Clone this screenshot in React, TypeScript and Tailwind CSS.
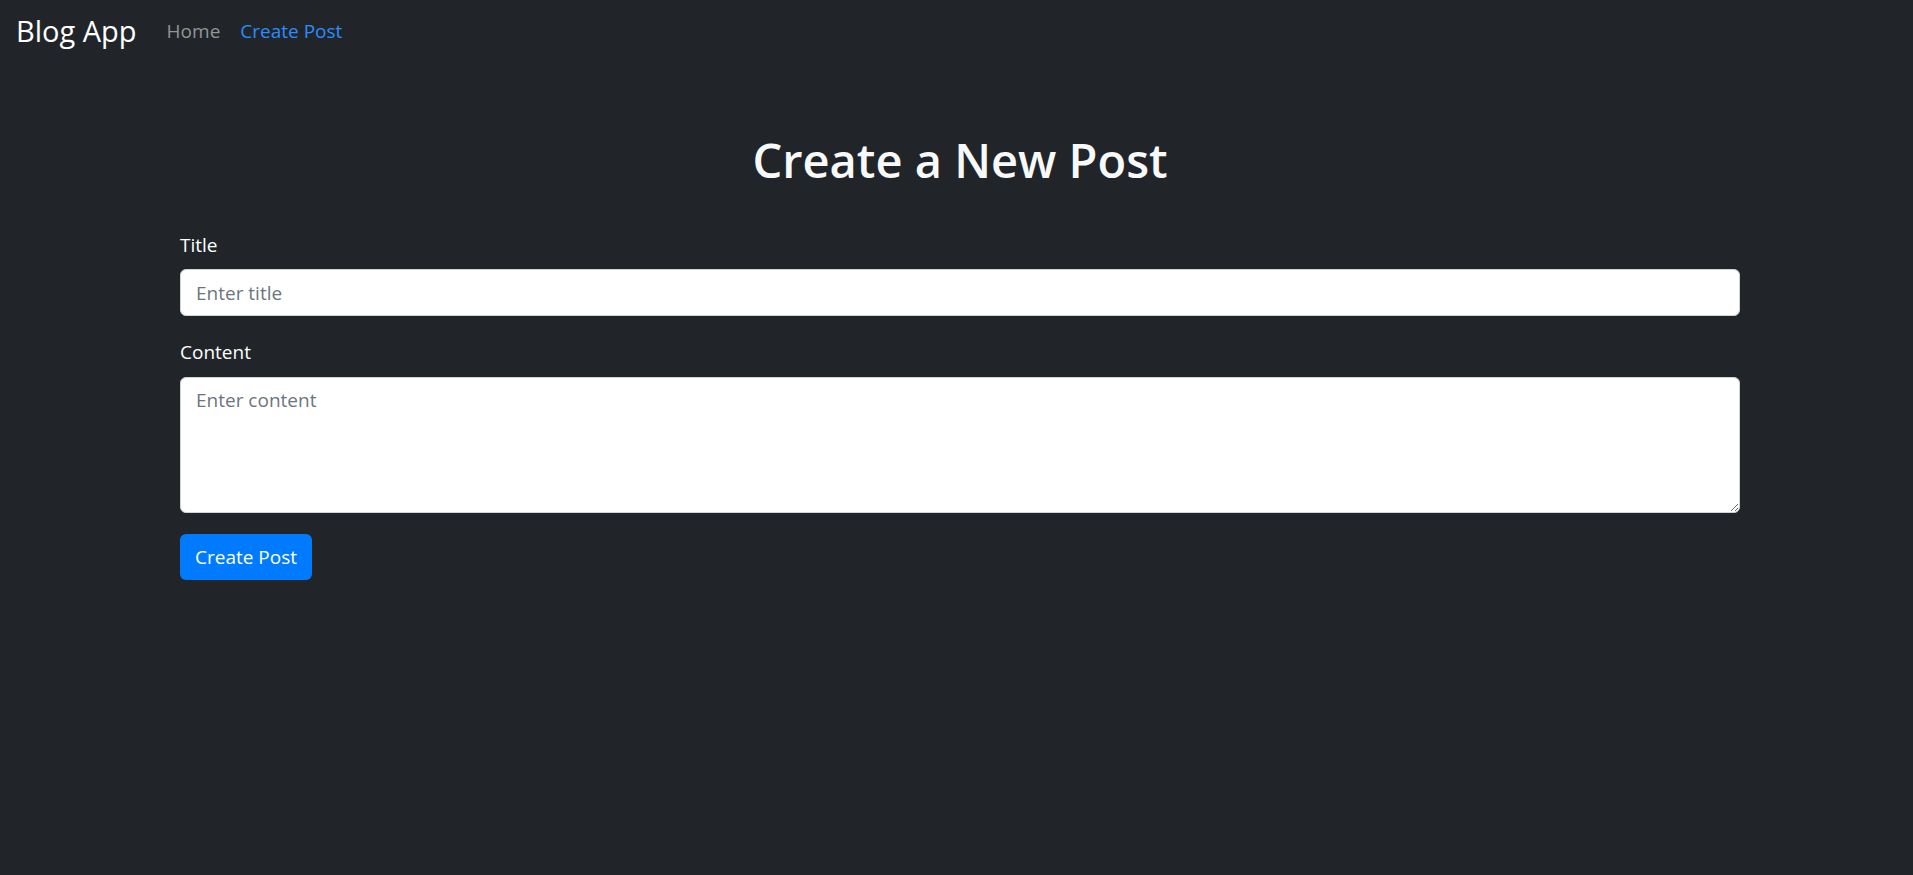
import React, { useState } from 'react';

const font = { fontFamily: '"Open Sans", "Noto Sans", sans-serif' };

const App: React.FC = () => {
    const [title, setTitle] = useState('');
    const [content, setContent] = useState('');

    return (
        <div className="min-h-screen bg-[#212529] text-[#f8f9fa]" style={font}>
            {/* Navbar */}
            <nav className="flex items-center h-[62px] px-[16px]">
                <a href="#" className="text-[29px] leading-[38px] text-white mr-[20px]">Blog App</a>
                <a href="#" className="text-[19px] leading-[30px] px-[10px] text-[#929496]">Home</a>
                <a href="#" className="text-[19px] leading-[30px] px-[10px] text-[#2b8cff]">Create Post</a>
            </nav>

            {/* Form */}
            <div className="ml-[180px] w-[1560px]">
                <h1 className="mt-[68px] mb-[40px] text-center text-[47px] leading-[60px] font-semibold text-[#f8f9fa]">
                    Create a New Post
                </h1>
                <form onSubmit={(e) => e.preventDefault()}>
                    <div className="mb-[21px]">
                        <label className="block text-[19px] leading-[30px] mb-[9px] text-white">Title</label>
                        <input
                            type="text"
                            placeholder="Enter title"
                            value={title}
                            onChange={(e) => setTitle(e.target.value)}
                            className="block w-full h-[47px] px-[15px] bg-white text-[19px] text-[#495057] placeholder:text-[#6c757d] border border-[#ced4da] rounded-[6px] outline-none"
                        />
                    </div>
                    <div className="mb-[21px]">
                        <label className="block text-[19px] leading-[30px] mb-[10px] text-white">Content</label>
                        <textarea
                            placeholder="Enter content"
                            value={content}
                            onChange={(e) => setContent(e.target.value)}
                            className="block w-full h-[136px] px-[15px] py-[7px] bg-white text-[19px] leading-[30px] text-[#495057] placeholder:text-[#6c757d] border border-[#ced4da] rounded-[6px] outline-none"
                        />
                    </div>
                    <button
                        type="submit"
                        className="w-[132px] h-[46px] bg-[#007bff] text-white text-[19px] rounded-[6px]"
                    >
                        Create Post
                    </button>
                </form>
            </div>
        </div>
    );
};

export default App;
